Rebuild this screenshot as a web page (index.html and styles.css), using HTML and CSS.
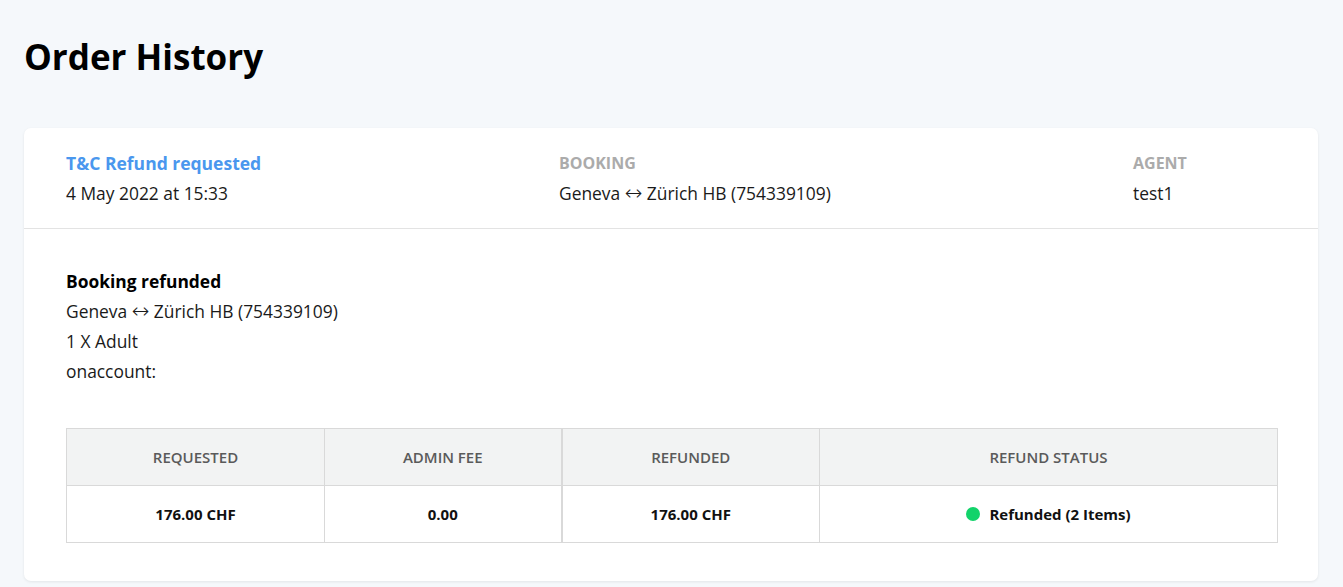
FILE: index.html
```html
<!DOCTYPE html>
<html>
<head>
<meta charset="utf-8">
<link rel="stylesheet" href="styles.css">
</head>
<body>
<main class="page">
  <h1 class="title">Order History</h1>
  <section class="card">
    <div class="card-head">
      <div class="col col-event">
        <div class="event">T&amp;C Refund requested</div>
        <div class="value">4 May 2022 at 15:33</div>
      </div>
      <div class="col col-booking">
        <div class="label">BOOKING</div>
        <div class="value">Geneva <span class="arrow">↔</span> Zürich HB (754339109)</div>
      </div>
      <div class="col col-agent">
        <div class="label">AGENT</div>
        <div class="value">test1</div>
      </div>
    </div>
    <div class="card-body">
      <div class="details">
        <div class="details-title">Booking refunded</div>
        <div>Geneva <span class="arrow">↔</span> Zürich HB (754339109)</div>
        <div>1 X Adult</div>
        <div>onaccount:</div>
      </div>
      <table class="refund">
        <colgroup>
          <col class="c1"><col class="c2"><col class="c3"><col class="c4">
        </colgroup>
        <thead>
          <tr><th>REQUESTED</th><th>ADMIN FEE</th><th class="split">REFUNDED</th><th>REFUND STATUS</th></tr>
        </thead>
        <tbody>
          <tr><td>176.00 CHF</td><td>0.00</td><td class="split">176.00 CHF</td><td><span class="status"><span class="dot"></span>Refunded (2 Items)</span></td></tr>
        </tbody>
      </table>
    </div>
  </section>
</main>
</body>
</html>
```

FILE: styles.css
```css
* { box-sizing: border-box; }
html, body { margin: 0; padding: 0; }
body {
  background: #f5f8fb;
  font-family: "Open Sans", "Liberation Sans", sans-serif;
  color: #1a1a1a;
}
.page {
  padding: 34px 25px 6px 24px;
}
.title {
  margin: 0 0 48px 0;
  font-size: 35px;
  line-height: 46px;
  font-weight: 700;
  color: #000;
}
.card {
  background: #fff;
  border-radius: 7px;
  box-shadow: 0 1px 3px rgba(0,0,0,0.08);
}
.card-head {
  display: grid;
  grid-template-columns: 493px 574px auto;
  padding: 20px 42px 20px 42px;
  border-bottom: 1px solid #e3e3e3;
}
.event {
  font-size: 17.5px;
  line-height: 30px;
  font-weight: 700;
  color: #4a97ee;
}
.label {
  font-size: 16px;
  line-height: 30px;
  font-weight: 700;
  color: #ababab;
}
.value {
  font-size: 17.4px;
  line-height: 30px;
  color: #1a1a1a;
}
.arrow {
  font-family: "DejaVu Sans", sans-serif;
  font-size: 21px;
  line-height: 0;
  font-weight: 300;
}
.card-body {
  padding: 37px 41px 38px 42px;
}
.details {
  font-size: 17.4px;
  line-height: 30px;
  color: #1a1a1a;
}
.details-title { font-weight: 700; color: #000; }
.refund {
  margin-top: 42px;
  width: 1211px;
  border-collapse: collapse;
  table-layout: fixed;
  font-size: 15px;
}
.c1 { width: 258px; }
.c2 { width: 237px; }
.c3 { width: 258px; }
.c4 { width: 458px; }
.refund th, .refund td {
  border: 1px solid #d9d9d9;
  text-align: center;
}
.refund th {
  background: #f2f3f3;
  height: 57px;
  font-weight: 600;
  color: #5a5a5a;
}
.refund td {
  height: 57px;
  font-weight: 700;
  color: #111;
}
.refund .split { border-left: 2px solid #d9d9d9; }
.status {
  display: inline-flex;
  align-items: center;
  gap: 9px;
}
.dot {
  width: 14px;
  height: 14px;
  border-radius: 50%;
  background: #12d36a;
}
```
